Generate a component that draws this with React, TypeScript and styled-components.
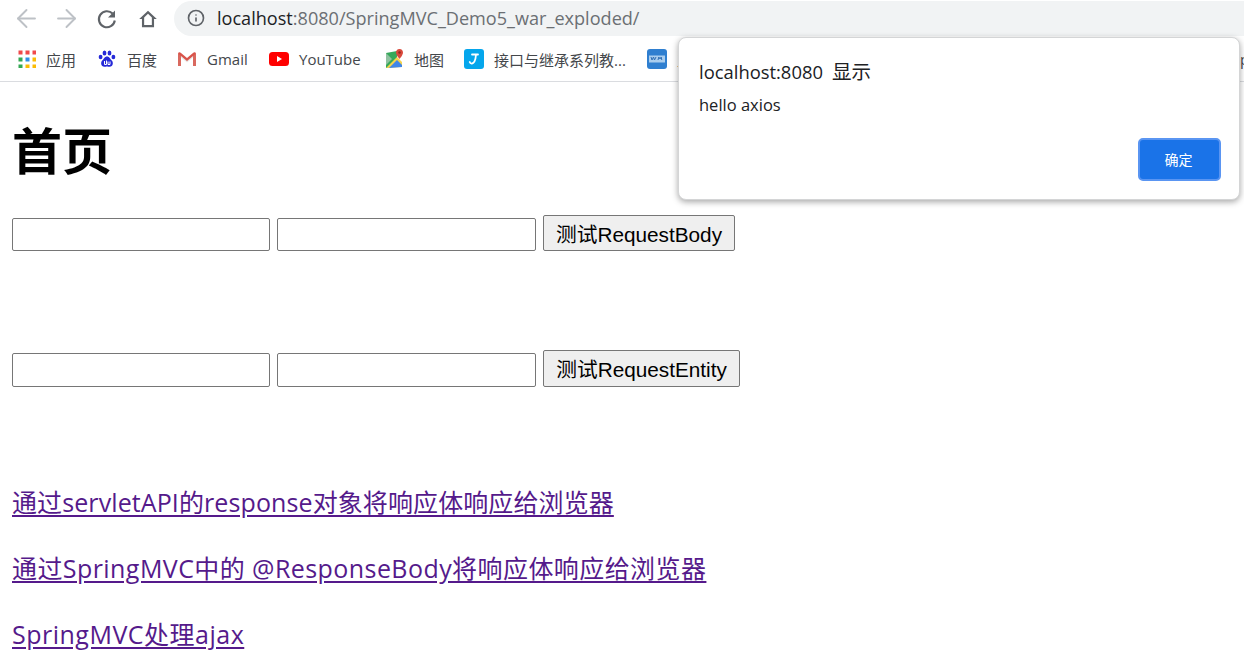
import React from 'react'
import styled, { createGlobalStyle } from 'styled-components'
import { ArrowLeft, ArrowRight, Info } from 'lucide-react'

const GlobalStyle = createGlobalStyle`
  html, body {
    margin: 0;
    height: 100%;
    overflow: hidden;
    background: #fff;
  }
`

const UI_FONT = `"Open Sans", "Noto Sans", "Noto Sans CJK SC", sans-serif`

const Window = styled.div`
  position: relative;
  width: 1244px;
  height: 666px;
  overflow: hidden;
  font-family: ${UI_FONT};
`

const Toolbar = styled.div`
  display: flex;
  align-items: center;
  height: 37px;
  color: #5f6368;
`

const NavGroup = styled.div`
  display: flex;
  flex: none;
  width: 174px;
  padding-left: 6px;
  box-sizing: border-box;
`

const NavButton = styled.div<{ $muted?: boolean }>`
  display: flex;
  justify-content: center;
  align-items: center;
  width: 40.5px;
  height: 30px;
  color: ${(p) => (p.$muted ? '#bdc1c6' : '#5f6368')};
`

const Omnibox = styled.div`
  display: flex;
  align-items: center;
  flex: 1;
  box-sizing: border-box;
  height: 35px;
  padding: 0 0 2px 13px;
  border-radius: 18px 0 0 18px;
  background: #f1f3f4;
  font-size: 18.1px;
  color: #6b6f73;
`

const Host = styled.span`
  margin-left: 12px;
  color: #202124;
`

const BookmarkBar = styled.div`
  display: flex;
  align-items: center;
  height: 44px;
  padding-left: 18px;
  border-bottom: 1px solid #dadce0;
  white-space: nowrap;
  overflow: hidden;
`

const Bookmark = styled.div<{ $gap: number; $width: number }>`
  display: flex;
  align-items: center;
  flex: none;
  gap: ${(p) => p.$gap}px;
  width: ${(p) => p.$width}px;
  font-size: 15px;
  color: #44474b;
`

const Page = styled.main`
  padding: 0 12px;
  font-family: "Open Sans", "Noto Sans CJK SC", sans-serif;
`

const Title = styled.h1`
  margin: 31px 0 0;
  height: 73px;
  font-family: "Noto Sans CJK SC", sans-serif;
  font-size: 50px;
  line-height: 70px;
  font-weight: 700;
  color: #000;
`

const FormRow = styled.form<{ $top: number }>`
  display: flex;
  align-items: flex-end;
  gap: 7px;
  margin-top: ${(p) => p.$top}px;
`

const TextInput = styled.input<{ $wide?: boolean; $tall?: boolean }>`
  box-sizing: border-box;
  width: ${(p) => (p.$wide ? 259 : 258)}px;
  height: ${(p) => (p.$tall ? 34 : 33)}px;
  padding: 0 3px;
  border: 1px solid #767676;
  border-radius: 2px;
  background: #fff;
`

const SubmitButton = styled.button<{ $width: number; $tall?: boolean }>`
  box-sizing: border-box;
  width: ${(p) => p.$width}px;
  height: ${(p) => (p.$tall ? 37 : 36)}px;
  padding: 3px 0 0;
  border: 1px solid #767676;
  border-radius: 2px;
  background: #efefef;
  font-family: "Liberation Sans", "Noto Sans CJK SC", sans-serif;
  font-size: 20.75px;
  line-height: 28px;
  color: #000;
`

const LinkList = styled.div`
  display: flex;
  flex-direction: column;
  gap: 30px;
  margin-top: 97px;
`

const PageLink = styled.a<{ $spacing: number }>`
  display: block;
  width: max-content;
  height: 36px;
  font-size: 25px;
  line-height: 36px;
  letter-spacing: ${(p) => p.$spacing}px;
  color: #551a8b;
  text-decoration: underline;
  text-underline-offset: 3px;
`

const Dialog = styled.div`
  position: absolute;
  left: 678px;
  top: 37px;
  box-sizing: border-box;
  width: 562px;
  height: 163px;
  padding: 20px 18px 18px 20px;
  border: 1px solid #d4d5d6;
  border-radius: 8px;
  background: #fff;
  box-shadow: 0 2px 6px rgba(0, 0, 0, 0.35);
  color: #202124;
`

const DialogTitle = styled.div`
  height: 28px;
  font-size: 18.4px;
  line-height: 28px;
`

const DialogTitleCjk = styled.span`
  margin-left: 9px;
  font-size: 19.5px;
`

const DialogMessage = styled.div`
  height: 24px;
  margin-top: 7px;
  font-size: 16.5px;
  line-height: 24px;
`

const DialogActions = styled.div`
  display: flex;
  justify-content: flex-end;
  margin-top: 21px;
`

const ConfirmButton = styled.button`
  box-sizing: border-box;
  width: 83px;
  height: 43px;
  padding: 0 2px 2px 0;
  border: 2px solid #5a95f2;
  border-radius: 5px;
  background: #1a73e8;
  font-family: ${UI_FONT};
  font-size: 14px;
  color: #fff;
`

const ReloadIcon = () => (
  <svg width="22" height="22" viewBox="0 0 22 22">
    <path d="M16.600 5.600A8 8 0 1 0 18.800 12.500" fill="none" stroke="currentColor" strokeWidth="2.100" />
    <path d="M19 2.500v7h-7z" fill="currentColor" />
  </svg>
)

const HomeIcon = () => (
  <svg width="22" height="22" viewBox="0 0 20 20">
    <path
      d="M10 2.500L2 10h2.500v7.500h11V10H18zM6.500 8.700L10 5.300l3.500 3.400v6.800h-7z"
      fill="currentColor"
      fillRule="evenodd"
    />
  </svg>
)

const AppsIcon = () => (
  <svg width="18" height="18" viewBox="0 0 18 18">
    {[
      ['#f0494b', '#f0494b', '#f0494b'],
      ['#34a853', '#2f8fe8', '#fbbc05'],
      ['#34a853', '#fbbc05', '#fbbc05'],
    ].map((row, y) =>
      row.map((fill, x) => <rect key={`${x}-${y}`} x={x * 7 + 0.5} y={y * 7 + 0.5} width="4" height="4" fill={fill} />),
    )}
  </svg>
)

const BaiduIcon = () => (
  <svg width="18" height="20" viewBox="0 0 18 20">
    <g fill="#2529d8">
      <ellipse cx="6.500" cy="4" rx="1.900" ry="2.600" />
      <ellipse cx="11.500" cy="4" rx="1.900" ry="2.600" />
      <ellipse cx="2.600" cy="8" rx="1.900" ry="2.300" />
      <ellipse cx="15.400" cy="8" rx="1.900" ry="2.300" />
      <path d="M9 7.500c2.500 0 3 2.500 4.800 4 1.800 1.600 1.400 6.300-2.200 6.300-1.200 0-1.700-.4-2.600-.4s-1.400.4-2.600.4c-3.600 0-4-4.700-2.200-6.300C6 10 6.500 7.500 9 7.500z" />
    </g>
    <path d="M6.500 12v3.500h2V11.500M10 12.500v3h2v-3" fill="none" stroke="#fff" strokeWidth="1" />
  </svg>
)

const GmailIcon = () => (
  <svg width="20" height="16" viewBox="0 0 20 16">
    <path d="M1 15V2.500h2.500L10 8l6.500-5.500H19V15h-3V6.500L10 11.500 4 6.500V15z" fill="#e8e6e4" />
    <path d="M1 15V2.500L4 3v12zM16 15V3l3-.5V15z" fill="#d9695f" />
    <path d="M1 2.500C1.500 1 3 1 4 2l6 5 6-5c1-1 2.500-1 3 .5L10 10z" fill="#d9534a" />
  </svg>
)

const YoutubeIcon = () => (
  <svg width="20" height="14" viewBox="0 0 20 14">
    <rect width="20" height="14" rx="3.500" fill="#f00" />
    <path d="M8 4l5 3-5 3z" fill="#fff" />
  </svg>
)

const MapsIcon = () => (
  <svg width="20" height="20" viewBox="0 0 20 20">
    <path d="M1 4l11-2v15L1 19z" fill="#35a85a" />
    <path d="M1 19L12 8l5 5v5z" fill="#f5d34c" />
    <path d="M4 19l8-8 5 5v2z" fill="#3f86e8" />
    <path d="M1 4l6 6-6 6z" fill="#8fc1a0" />
    <path d="M14.500 0C12.300 0 11 1.700 11 3.500 11 6 14.500 10 14.500 10S18 6 18 3.500C18 1.700 16.700 0 14.500 0z" fill="#d9483b" />
    <circle cx="14.500" cy="3.500" r="1.200" fill="#8a2a22" />
  </svg>
)

const JianshuIcon = () => (
  <svg width="20" height="20" viewBox="0 0 20 20">
    <rect width="20" height="20" rx="3" fill="#05a6ec" />
    <path d="M8 5.500h6M12 5.500c-.3 4-1 8.500-4 9-1.300.2-2-.6-2.300-1.500" fill="none" stroke="#fff" strokeWidth="1.800" strokeLinecap="round" />
  </svg>
)

const BlueSiteIcon = () => (
  <svg width="20" height="20" viewBox="0 0 20 20">
    <rect width="20" height="20" rx="3" fill="#2f7fd0" />
    <rect x="2" y="6.500" width="16" height="7" fill="#a9cdee" />
    <path d="M4 8l1 3 1.500-3 1 3L9 8M11 11l.8-3 1.200 2 1.200-2 .6 3" fill="none" stroke="#2f6fb5" strokeWidth="1" />
  </svg>
)

const bookmarks = [
  { label: '应用', icon: <AppsIcon />, gap: 10, width: 80 },
  { label: '百度', icon: <BaiduIcon />, gap: 11, width: 79 },
  { label: 'Gmail', icon: <GmailIcon />, gap: 10, width: 92 },
  { label: 'YouTube', icon: <YoutubeIcon />, gap: 10, width: 116 },
  { label: '地图', icon: <MapsIcon />, gap: 9, width: 79 },
  { label: '接口与继承系列教...', icon: <JianshuIcon />, gap: 10, width: 183 },
  { label: '工', icon: <BlueSiteIcon />, gap: 10, width: 593 },
  { label: 'p', icon: null, gap: 0, width: 10 },
]

const links = [
  { text: '通过servletAPI的response对象将响应体响应给浏览器', spacing: 0.1 },
  { text: '通过SpringMVC中的 @ResponseBody将响应体响应给浏览器', spacing: 0.43 },
  { text: 'SpringMVC处理ajax', spacing: 0.5 },
]

const App: React.FC = () => (
  <Window>
    <GlobalStyle />
    <Toolbar>
      <NavGroup>
        <NavButton $muted>
          <ArrowLeft size={29} strokeWidth={1.6} />
        </NavButton>
        <NavButton $muted>
          <ArrowRight size={29} strokeWidth={1.6} />
        </NavButton>
        <NavButton>
          <ReloadIcon />
        </NavButton>
        <NavButton>
          <HomeIcon />
        </NavButton>
      </NavGroup>
      <Omnibox>
        <Info size={18} strokeWidth={2.2} color="#5f6368" />
        <Host>localhost</Host>:8080/SpringMVC_Demo5_war_exploded/
      </Omnibox>
    </Toolbar>
    <BookmarkBar>
      {bookmarks.map((item) => (
        <Bookmark key={item.label} $gap={item.gap} $width={item.width}>
          {item.icon}
          {item.label}
        </Bookmark>
      ))}
    </BookmarkBar>
    <Page>
      <Title>首页</Title>
      <FormRow $top={29}>
        <TextInput />
        <TextInput $wide />
        <SubmitButton type="button" $width={192}>
          测试RequestBody
        </SubmitButton>
      </FormRow>
      <FormRow $top={99}>
        <TextInput $tall />
        <TextInput $wide $tall />
        <SubmitButton type="button" $width={197} $tall>
          测试RequestEntity
        </SubmitButton>
      </FormRow>
      <LinkList>
        {links.map((link) => (
          <PageLink key={link.text} href="#" $spacing={link.spacing}>
            {link.text}
          </PageLink>
        ))}
      </LinkList>
    </Page>
    <Dialog>
      <DialogTitle>
        localhost:8080<DialogTitleCjk>显示</DialogTitleCjk>
      </DialogTitle>
      <DialogMessage>hello axios</DialogMessage>
      <DialogActions>
        <ConfirmButton type="button">确定</ConfirmButton>
      </DialogActions>
    </Dialog>
  </Window>
)

export default App
